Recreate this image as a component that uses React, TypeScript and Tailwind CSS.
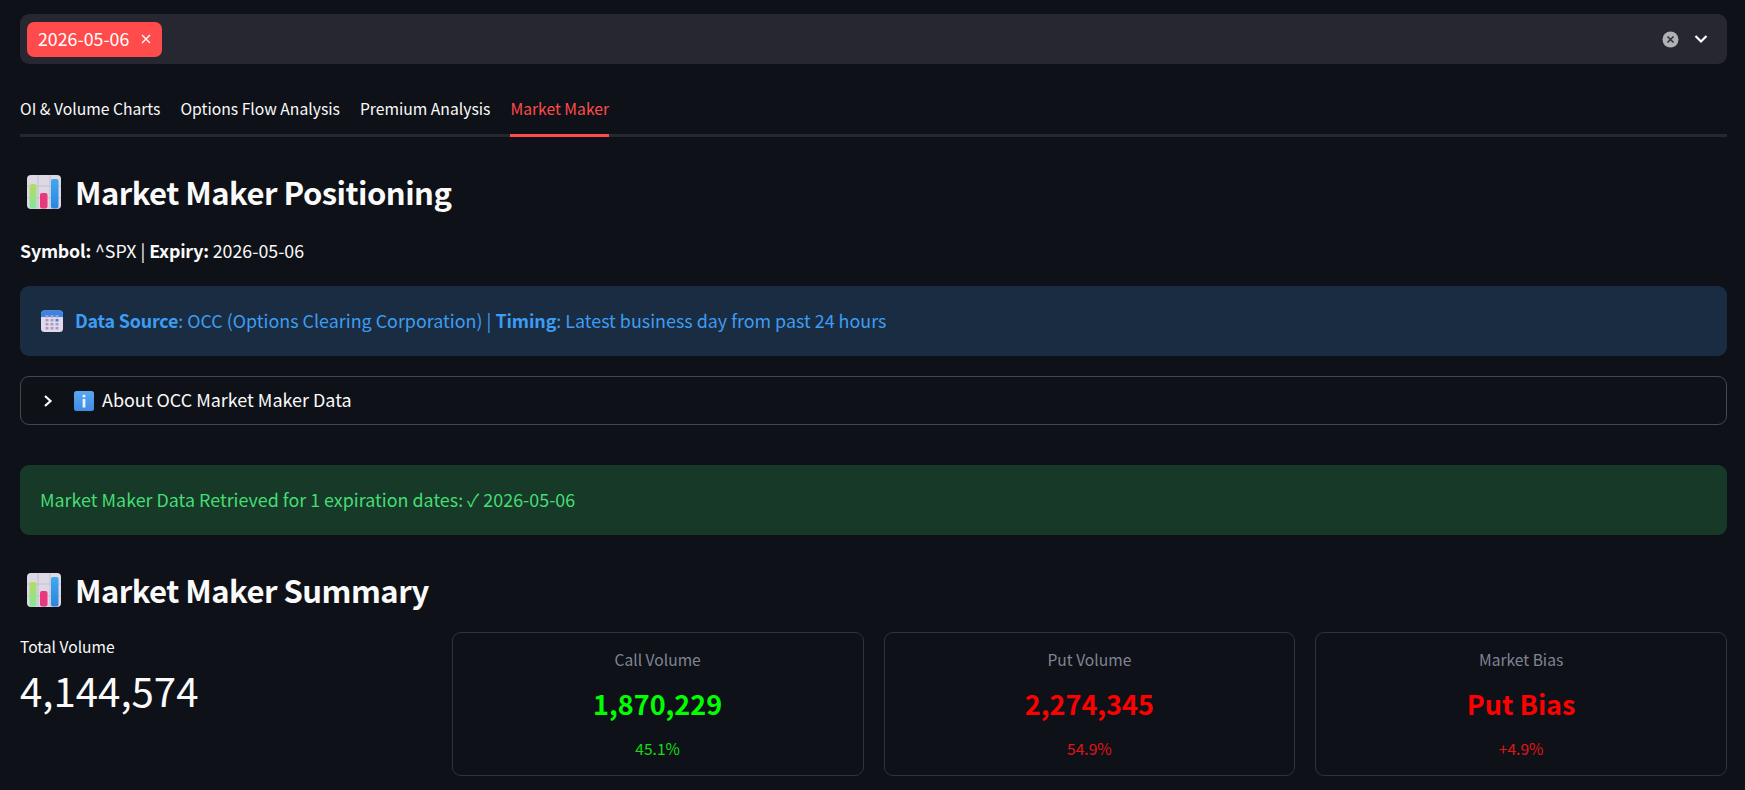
const BarChartEmoji = () => (
  <svg width="36" height="36" viewBox="0 0 36 36" className="shrink-0">
    <defs>
      <linearGradient id="barGreen" x1="0" y1="0" x2="0" y2="1">
        <stop offset="0" stopColor="#b4dc62" />
        <stop offset="1" stopColor="#84e69a" />
      </linearGradient>
      <linearGradient id="barBlue" x1="0" y1="0" x2="0" y2="1">
        <stop offset="0" stopColor="#3fa9f0" />
        <stop offset="1" stopColor="#2a85e0" />
      </linearGradient>
    </defs>
    <rect x="1" y="1" width="34" height="34" rx="4" fill="#ddd8e4" />
    <path d="M12 1v34M24 1v34M1 12h34M1 24h34" stroke="#c5c0cf" strokeWidth="1" />
    <rect x="3.5" y="10" width="7" height="24.5" rx="2" fill="url(#barGreen)" />
    <rect x="14" y="19" width="7.5" height="15.5" rx="2" fill="#e8397d" />
    <rect x="25" y="5" width="7.5" height="29.5" rx="2" fill="url(#barBlue)" />
  </svg>
);

const CalendarEmoji = () => (
  <svg width="24" height="24" viewBox="0 0 24 24" className="shrink-0">
    <rect x="1" y="1.5" width="22" height="21.5" rx="3.5" fill="#e3d9ee" />
    <path d="M1 8V5a3.5 3.5 0 0 1 3.5-3.5h15A3.5 3.5 0 0 1 23 5v3z" fill="#3a83e8" />
    {[6.5, 10.5, 14.5, 18.5].map((y) =>
      [5, 10, 15].map((x) => (
        <rect
          key={`${x}-${y}`}
          x={x + 0.5}
          y={y - 0.5}
          width="3"
          height="2.5"
          rx="0.5"
          fill={x === 15 && y === 10.5 ? "#3a83e8" : "#a79fb8"}
        />
      ))
    )}
  </svg>
);

const InfoEmoji = () => (
  <svg width="20" height="20" viewBox="0 0 20 20" className="shrink-0">
    <defs>
      <linearGradient id="infoBlue" x1="0" y1="0" x2="0" y2="1">
        <stop offset="0" stopColor="#5aa8f0" />
        <stop offset="1" stopColor="#3f8ce6" />
      </linearGradient>
    </defs>
    <rect x="0" y="0" width="20" height="20" rx="2.5" fill="url(#infoBlue)" />
    <circle cx="10" cy="5" r="1.6" fill="#e8f2fc" />
    <rect x="8.6" y="8" width="2.8" height="8.5" fill="#e8f2fc" />
  </svg>
);

const Metric = ({
  title,
  value,
  sub,
  valueColor,
  subColor,
}: {
  title: string;
  value: string;
  sub: string;
  valueColor: string;
  subColor: string;
}) => (
  <div className="h-[144px] rounded-[9px] border border-[#30333b] flex flex-col items-center pt-[14px]">
    <div className="text-[15.6px] leading-[24px] text-[#808495]">{title}</div>
    <div className={`mt-[11px] text-[27px] leading-[44px] font-bold ${valueColor}`}>{value}</div>
    <div className={`mt-[10px] text-[15.6px] leading-[24px] ${subColor}`}>{sub}</div>
  </div>
);

export default function App() {
  return (
    <div className="min-h-[790px] bg-[#0e1117] text-[#fafafa] pl-[20px] pr-[18px] pt-[14px] font-['Noto_Sans_CJK_SC',sans-serif] text-[17.8px] overflow-hidden">
      <div className="h-[50px] rounded-[9px] bg-[#262730] flex items-center pl-[7px] pr-[19px]">
        <div className="h-[35px] w-[135px] rounded-[7px] bg-[#ff4b4b] flex items-center pl-[11px] gap-[12px] text-white text-[17.8px]">
          <span className="-mt-[2px]">2026-05-06</span>
          <svg width="10" height="10" viewBox="0 0 10 10">
            <path d="M1 1l8 8M9 1l-8 8" stroke="white" strokeWidth="1.4" />
          </svg>
        </div>
        <div className="ml-auto flex items-center gap-[15px]">
          <svg width="17" height="17" viewBox="0 0 17 17">
            <circle cx="8.5" cy="8.5" r="8" fill="#b0b1b6" />
            <path d="M5.5 5.5l6 6M11.5 5.5l-6 6" stroke="#33343d" strokeWidth="1.7" />
          </svg>
          <svg width="14" height="10" viewBox="0 0 14 10">
            <path d="M1.5 2l5.5 5.5L12.5 2" fill="none" stroke="white" strokeWidth="2.2" />
          </svg>
        </div>
      </div>

      <div className="mt-[18px] h-[55px] flex gap-[20px] border-b-[3px] border-[#262730] text-[15.7px]">
        <div className="pt-[15px]">OI &amp; Volume Charts</div>
        <div className="pt-[15px]">Options Flow Analysis</div>
        <div className="pt-[15px]">Premium Analysis</div>
        <div className="pt-[15px] h-[55px] border-b-[3px] border-[#ff4b4b] text-[#ff4b4b]">Market Maker</div>
      </div>

      <div className="mt-[30px] h-[50px] flex items-center pl-[6px] gap-[13px] text-[31px] tracking-[-0.5px] font-bold leading-[50px]">
        <BarChartEmoji />
        <h2>Market Maker Positioning</h2>
      </div>

      <div className="mt-[19px] leading-[28px]">
        <b className="tracking-[-0.2px]">Symbol:</b> ^SPX | <b className="tracking-[-0.2px]">Expiry:</b> 2026-05-06
      </div>

      <div className="mt-[22px] h-[70px] rounded-[9px] bg-[#1a2c42] text-[#3d9df3] flex items-center pl-[20px] gap-[11px]">
        <CalendarEmoji />
        <div className="-mt-[2px] text-[17.9px]">
          <b className="tracking-[-0.2px]">Data Source</b>: OCC (Options Clearing Corporation) |{" "}
          <b className="tracking-[-0.1px]">Timing</b>: Latest business day from past 24 hours
        </div>
      </div>

      <div className="mt-[20px] h-[49px] rounded-[9px] border border-[#45474d] flex items-center pl-[21px]">
        <svg width="12" height="14" viewBox="0 0 12 14">
          <path d="M3 2l5.5 5L3 12" fill="none" stroke="white" strokeWidth="2.2" />
        </svg>
        <div className="ml-[20px] mr-[8px]">
          <InfoEmoji />
        </div>
        <span className="-mt-[2px] text-[17.95px]">About OCC Market Maker Data</span>
      </div>

      <div className="mt-[40px] h-[70px] rounded-[9px] bg-[#173928] text-[#45dd74] flex items-center pl-[20px]">
        <span className="-mt-[2px] text-[17.9px]">Market Maker Data Retrieved for 1 expiration dates: ✓ 2026-05-06</span>
      </div>

      <div className="mt-[30px] h-[50px] flex items-center pl-[6px] gap-[13px] text-[31px] tracking-[-0.5px] font-bold leading-[50px]">
        <BarChartEmoji />
        <h2>Market Maker Summary</h2>
      </div>

      <div className="mt-[17px] grid grid-cols-4 gap-[20px]">
        <div className="pt-[2px]">
          <div className="text-[15.6px] leading-[24px]">Total Volume</div>
          <div className="mt-[4px] text-[40.2px] leading-[56px]">4,144,574</div>
        </div>
        <Metric title="Call Volume" value="1,870,229" sub="45.1%" valueColor="text-[#00ff00]" subColor="text-[#12dd12]" />
        <Metric title="Put Volume" value="2,274,345" sub="54.9%" valueColor="text-[#ff0000]" subColor="text-[#e01515]" />
        <Metric title="Market Bias" value="Put Bias" sub="+4.9%" valueColor="text-[#ff0000]" subColor="text-[#e01515]" />
      </div>
    </div>
  );
}
